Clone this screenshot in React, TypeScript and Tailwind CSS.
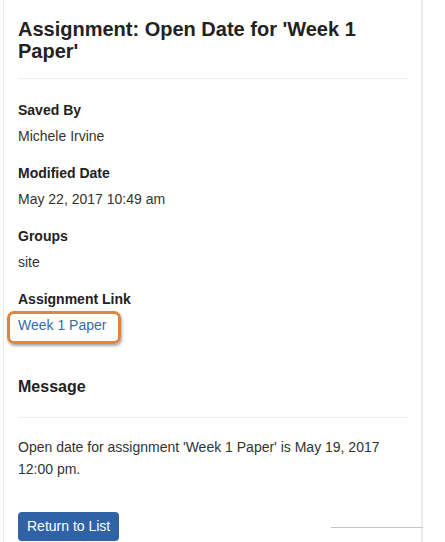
export default function App() {
  return (
    <div className="relative h-[542px] w-[445px] overflow-hidden bg-white font-['Liberation_Sans',Arial,sans-serif] text-[14px] text-[#333]">
      <div className="ml-[3px] h-full w-[420px] border-l border-r-2 border-l-[#ececec] border-r-[#ececec] px-[14px] pt-[18px]">
        <h1 className="text-[20px] font-bold leading-[22px] text-[#222]">
          Assignment: Open Date for 'Week 1 Paper'
        </h1>
        <div className="mt-[16px] h-px bg-[#eeeeee]" />

        <dl className="mt-[21px] flex flex-col gap-[17px] leading-[20px]">
          <div>
            <dt className="font-bold text-[#222]">Saved By</dt>
            <dd className="mt-[6px]">Michele Irvine</dd>
          </div>
          <div>
            <dt className="font-bold text-[#222]">Modified Date</dt>
            <dd className="mt-[6px]">May 22, 2017 10:49 am</dd>
          </div>
          <div>
            <dt className="font-bold text-[#222]">Groups</dt>
            <dd className="mt-[6px]">site</dd>
          </div>
          <div>
            <dt className="font-bold text-[#222]">Assignment Link</dt>
            <dd className="relative mt-[6px]">
              <a href="#" className="text-[#3a69a8]">
                Week 1 Paper
              </a>
              <span className="pointer-events-none absolute left-[-11px] top-[-4px] h-[33px] w-[114px] rounded-[7px] border-[3px] border-[#e0853f] shadow-[1px_2px_3px_rgba(0,0,0,0.35)]" />
            </dd>
          </div>
        </dl>

        <h2 className="mt-[42px] text-[16px] font-bold leading-[20px] text-[#222]">Message</h2>
        <div className="mt-[20px] h-px bg-[#eeeeee]" />
        <p className="mt-[18px] leading-[22px]">
          Open date for assignment 'Week 1 Paper' is May 19, 2017 12:00 pm.
        </p>

        <button className="mt-[32px] h-[29px] rounded-[4px] bg-[#2f63a6] px-[9px] text-[14px] text-white">
          Return to List
        </button>
      </div>
      <div className="absolute left-[331px] top-[527px] h-px w-[92px] bg-[#c4c4c4]" />
    </div>
  )
}
